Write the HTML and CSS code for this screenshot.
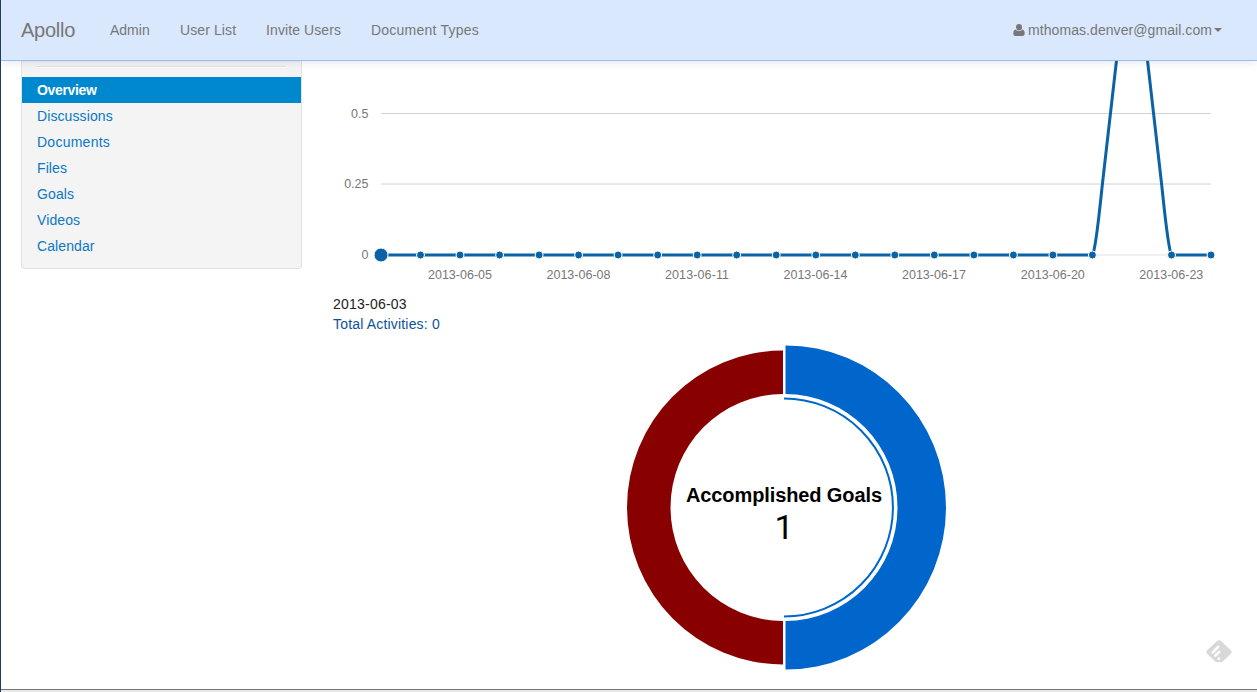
FILE: index.html
```
<!DOCTYPE html>
<html lang="en">
<head>
<meta charset="utf-8">
<title>Apollo</title>
<link rel="stylesheet" href="styles.css">
</head>
<body>
<div class="page">
  <header class="navbar">
    <a class="brand">Apollo</a>
    <nav class="nav">
      <a class="nav-admin">Admin</a>
      <a class="nav-users">User List</a>
      <a class="nav-invite">Invite Users</a>
      <a class="nav-types">Document Types</a>
    </nav>
    <a class="account">
      <svg class="user-icon" width="12" height="12" viewBox="0 0 12 12"><ellipse cx="6" cy="3.3" rx="3" ry="3.300"/><path d="M2.700 5.500C1 5.800 .3 7.300 .3 9.500C.3 11.200 1.200 12 2.500 12H9.500C10.800 12 11.700 11.200 11.700 9.500C11.700 7.300 11 5.800 9.300 5.500C7.700 7.700 4.300 7.700 2.700 5.500Z"/></svg>
      <span class="email">mthomas.denver@gmail.com</span>
      <span class="caret"></span>
    </a>
  </header>
  <div class="content">
    <aside class="sidebar">
      <div class="divider"></div>
      <a class="item active">Overview</a>
      <a class="item">Discussions</a>
      <a class="item item-documents">Documents</a>
      <a class="item">Files</a>
      <a class="item">Goals</a>
      <a class="item">Videos</a>
      <a class="item">Calendar</a>
    </aside>
    <main class="main">
      <svg class="chart" width="900" height="229" viewBox="333 61 900 229">
        <g class="grid"><path d="M381 113.500H1211M381 184H1211"/><path class="base" d="M381 255H1211"/></g>
        <g class="ylabels"><text x="368.500" y="118">0.5</text><text x="368.500" y="188">0.25</text><text x="368.500" y="259">0</text></g>
        <path class="line" d="M381 255H1092.500C1096 249 1100 206 1102.400 184C1105 161 1111 110 1117 56M1147 56C1153 110 1159 161 1161.600 184C1164 206 1168 249 1171.500 255H1211"/>
        <g class="points">
          <circle cx="381" cy="255" r="7"/><circle cx="420.500" cy="255" r="4"/><circle cx="460" cy="255" r="4"/><circle cx="499.600" cy="255" r="4"/><circle cx="539.100" cy="255" r="4"/><circle cx="578.600" cy="255" r="4"/><circle cx="618.100" cy="255" r="4"/><circle cx="657.700" cy="255" r="4"/><circle cx="697.200" cy="255" r="4"/><circle cx="736.700" cy="255" r="4"/><circle cx="776.200" cy="255" r="4"/><circle cx="815.800" cy="255" r="4"/><circle cx="855.300" cy="255" r="4"/><circle cx="894.800" cy="255" r="4"/><circle cx="934.300" cy="255" r="4"/><circle cx="973.900" cy="255" r="4"/><circle cx="1013.400" cy="255" r="4"/><circle cx="1052.900" cy="255" r="4"/><circle cx="1092.400" cy="255" r="4"/><circle cx="1171.500" cy="255" r="4"/><circle cx="1211" cy="255" r="4"/>
        </g>
        <g class="xlabels">
          <text x="460" y="279" textLength="64">2013-06-05</text><text x="578.500" y="279" textLength="64">2013-06-08</text><text x="697" y="279" textLength="64">2013-06-11</text><text x="815.500" y="279" textLength="64">2013-06-14</text><text x="934" y="279" textLength="64">2013-06-17</text><text x="1052.800" y="279" textLength="64">2013-06-20</text><text x="1171.300" y="279" textLength="64">2013-06-23</text>
        </g>
      </svg>
      <div class="hover-date">2013-06-03</div>
      <div class="hover-total">Total Activities: 0</div>
      <svg class="donut" width="330" height="330" viewBox="620 342 330 330">
        <path fill="#800" d="M783 350.500A156 157 0 0 0 783 664.500V621A112.500 113.500 0 0 1 783 394Z"/>
        <path fill="#06c" d="M785.500 345.500A160.500 162 0 0 1 785.500 669.500V621A112 113.500 0 0 0 785.500 394Z"/>
        <path class="ring" d="M784 398.500A109 109 0 0 1 784 616.500"/>
        <text class="donut-title" x="784" y="502" textLength="196">Accomplished Goals</text>
        <text class="donut-value" x="784" y="539">1</text>
      </svg>
    </main>
  </div>
  <svg class="feedly" width="26" height="24" viewBox="0 0 26 24"><path fill="#d8d8d8" d="M11 1Q13 -.6 15 1L25 10.400Q26.400 12 25 13.500L17 21.300Q16 22.200 14.500 22.200H11Q10 22.200 9 21.300L.9 13.500Q-.4 12 .9 10.400Z"/><path class="feedly-bars" d="M6.700 12.300L12.200 6.800M9.300 15.700L13.200 11.800M12.600 18.900L12.900 18.600"/></svg>
  <div class="bottom-edge"></div>
</div>
</body>
</html>
```
FILE: styles.css
```
* { box-sizing: border-box; }
body { margin: 0; background: #fff; font: 14px/20px "Liberation Sans", Arial, sans-serif; overflow: hidden; }
.page { position: relative; height: 692px; border-left: 1px solid #223a60; display: flex; flex-direction: column; overflow: hidden; }
.navbar { position: relative; z-index: 1; height: 61px; flex: none; display: flex; align-items: center; padding: 0 34px 0 20px; background: #dae8fe; border-bottom: 1px solid #94bdfd; box-shadow: 0 1px 10px rgba(0,0,0,.1); color: #777; }
.brand { width: 89px; font-size: 20px; letter-spacing: -.25px; }
.nav { display: flex; }
.nav-admin { width: 70px; }
.nav-users { width: 86px; letter-spacing: .1px; }
.nav-invite { width: 105px; letter-spacing: .1px; }
.nav-types { letter-spacing: .22px; }
.account { margin-left: auto; display: flex; align-items: center; }
.user-icon { fill: #777; margin-right: 3px; }
.email { letter-spacing: .07px; }
.caret { margin-left: 2px; border: 4px solid transparent; border-top-color: #777; border-bottom: 0; margin-right: 1px; }
.content { display: flex; gap: 31px; padding-left: 20px; flex: 1; min-height: 0; }
.sidebar { width: 281px; height: 208px; background: #f4f4f4; border: 1px solid #e1e1e1; border-top: 0; border-radius: 0 0 4px 4px; padding-top: 5px; box-shadow: inset 0 1px 1px rgba(0,0,0,.03); }
.divider { height: 2px; margin: 0 15px 9px; background: #e3e3e3; border-bottom: 1px solid #fff; }
.item { display: block; height: 26px; padding: 3px 15px; color: #0b78c4; letter-spacing: .1px; }
.item-documents { letter-spacing: .25px; }
.active { background: #0088cf; color: #fff; font-weight: bold; letter-spacing: -.35px; }
.main { display: flex; flex-direction: column; }
.chart { display: block; margin-bottom: 4px; }
.chart text { font-size: 12.5px; fill: #777; }
.grid { stroke: #d2d2d2; fill: none; }
.base { stroke: #e1e1e1; }
.ylabels { text-anchor: end; }
.xlabels { text-anchor: middle; }
.line { fill: none; stroke: #0b62a4; stroke-width: 3; }
.points { fill: #0b62a4; stroke: #fff; }
.hover-date { color: #222; letter-spacing: .22px; }
.hover-total { color: #0b529a; letter-spacing: .18px; }
.donut { margin: 8px 0 0 287px; flex: none; }
.ring { fill: none; stroke: #06c; stroke-width: 2; }
.donut text { text-anchor: middle; fill: #000; }
.donut-title { font-size: 20px; font-weight: bold; }
.donut .donut-value { font: 34px Roboto, sans-serif; }
.feedly { position: absolute; left: 1205px; top: 640px; }
.feedly-bars { fill: none; stroke: #fff; stroke-width: 2.600; stroke-linecap: round; }
.bottom-edge { height: 3px; flex: none; background: #e8e8e8; border-top: 1px solid #777; }
```
